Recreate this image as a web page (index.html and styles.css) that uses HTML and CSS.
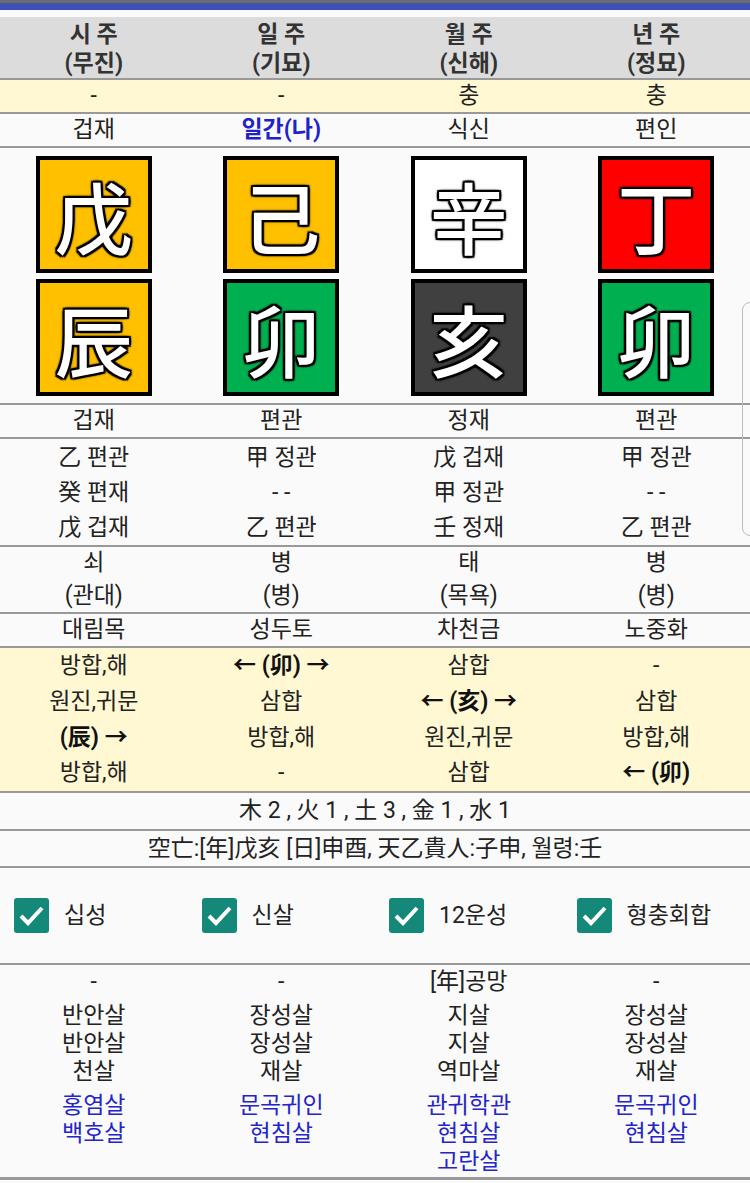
FILE: index.html
```html
<!DOCTYPE html>
<html lang="ko">
<head>
  <meta charset="UTF-8">
  <meta name="viewport" content="width=device-width, initial-scale=1.0">
  <title>사주 명식</title>
  <link rel="stylesheet" href="styles.css">
</head>
<body>
  <div class="topbar"></div>

  <div class="saju">
    <div class="row head">
      <div>시 주<br>(무진)</div>
      <div>일 주<br>(기묘)</div>
      <div>월 주<br>(신해)</div>
      <div>년 주<br>(정묘)</div>
    </div>

    <div class="row yellow">
      <div>-</div><div>-</div><div>충</div><div>충</div>
    </div>

    <div class="row">
      <div>겁재</div><div class="me">일간(나)</div><div>식신</div><div>편인</div>
    </div>

    <div class="row pillars">
      <div class="pillar">
        <span class="gan earth">戊</span>
        <span class="gan earth">辰</span>
      </div>
      <div class="pillar">
        <span class="gan earth">己</span>
        <span class="gan wood">卯</span>
      </div>
      <div class="pillar">
        <span class="gan metal">辛</span>
        <span class="gan water">亥</span>
      </div>
      <div class="pillar">
        <span class="gan fire">丁</span>
        <span class="gan wood">卯</span>
      </div>
    </div>

    <div class="row">
      <div>겁재</div><div>편관</div><div>정재</div><div>편관</div>
    </div>

    <div class="row lines jijang">
      <div>乙 편관<br>癸 편재<br>戊 겁재</div>
      <div>甲 정관<br>- -<br>乙 편관</div>
      <div>戊 겁재<br>甲 정관<br>壬 정재</div>
      <div>甲 정관<br>- -<br>乙 편관</div>
    </div>

    <div class="row lines unsung">
      <div>쇠<br>(관대)</div>
      <div>병<br>(병)</div>
      <div>태<br>(목욕)</div>
      <div>병<br>(병)</div>
    </div>

    <div class="row">
      <div>대림목</div><div>성두토</div><div>차천금</div><div>노중화</div>
    </div>

    <div class="row yellow lines hap">
      <div>방합,해<br>원진,귀문<br><b>(辰) →</b><br>방합,해</div>
      <div><b>← (卯) →</b><br>삼합<br>방합,해<br>-</div>
      <div>삼합<br><b>← (亥) →</b><br>원진,귀문<br>삼합</div>
      <div>-<br>삼합<br>방합,해<br><b>← (卯)</b></div>
    </div>

    <div class="wide">木 2 , 火 1 , 土 3 , 金 1 , 水 1</div>
    <div class="wide short">空亡:[年]戊亥 [日]申酉, 天乙貴人:子申, 월령:壬</div>

    <div class="row checks">
      <label class="check"><svg viewBox="0 0 35 35"><rect x="0" y="0" width="35" height="35" rx="3" fill="#14897a"/><path d="M7 18 L14 25 L28 10" fill="none" stroke="#fff" stroke-width="4"/></svg>십성</label>
      <label class="check"><svg viewBox="0 0 35 35"><rect x="0" y="0" width="35" height="35" rx="3" fill="#14897a"/><path d="M7 18 L14 25 L28 10" fill="none" stroke="#fff" stroke-width="4"/></svg>신살</label>
      <label class="check"><svg viewBox="0 0 35 35"><rect x="0" y="0" width="35" height="35" rx="3" fill="#14897a"/><path d="M7 18 L14 25 L28 10" fill="none" stroke="#fff" stroke-width="4"/></svg>12운성</label>
      <label class="check"><svg viewBox="0 0 35 35"><rect x="0" y="0" width="35" height="35" rx="3" fill="#14897a"/><path d="M7 18 L14 25 L28 10" fill="none" stroke="#fff" stroke-width="4"/></svg>형충회합</label>
    </div>

    <div class="row shinsal">
      <div>
        <p>-</p>
        <p>반안살<br>반안살<br>천살</p>
        <p class="blue">홍염살<br>백호살</p>
      </div>
      <div>
        <p>-</p>
        <p>장성살<br>장성살<br>재살</p>
        <p class="blue">문곡귀인<br>현침살</p>
      </div>
      <div>
        <p>[年]공망</p>
        <p>지살<br>지살<br>역마살</p>
        <p class="blue">관귀학관<br>현침살<br>고란살</p>
      </div>
      <div>
        <p>-</p>
        <p>장성살<br>장성살<br>재살</p>
        <p class="blue">문곡귀인<br>현침살</p>
      </div>
    </div>
  </div>

  <div class="side-tab"></div>
</body>
</html>
```

FILE: styles.css
```css
body {
  margin: 0;
  background: #fafafa;
  color: #222;
  font-family: Roboto, "Noto Sans CJK KR", sans-serif;
  font-size: 23px;
}
.topbar {
  height: 7px;
  border-top: 3px solid #6d6d6d;
  background: #3f51b5;
  margin-bottom: 7px;
}
.row {
  display: grid;
  grid-template-columns: repeat(4, 1fr);
  text-align: center;
  border-bottom: 2px solid #999;
  line-height: 32px;
}
.head {
  background: #dcdcdc;
  font-weight: bold;
  color: #333;
  line-height: 29px;
  padding-top: 3px;
}
.yellow {
  background: #fff8d2;
}
.me {
  color: #1e22c8;
  font-weight: bold;
}
.pillars {
  padding: 8px 0 7px;
}
.pillar {
  display: flex;
  flex-direction: column;
  align-items: center;
  gap: 6px;
}
.gan {
  box-sizing: border-box;
  width: 116px;
  height: 117px;
  border: 4px solid #000;
  display: flex;
  align-items: center;
  justify-content: center;
  font-family: "Noto Sans CJK KR", sans-serif;
  font-weight: 500;
  font-size: 78px;
  line-height: 1;
  color: #fff;
  text-shadow: 2px 0 1px #000, -2px 0 1px #000, 0 2px 1px #000, 0 -2px 1px #000,
    2px 2px 1px #000, -2px -2px 1px #000, 2px -2px 1px #000, -2px 2px 1px #000,
    0 0 4px #000;
}
.earth { background: #ffc000; }
.wood { background: #00b050; }
.metal { background: #fff; }
.water { background: #404040; }
.fire { background: #ff0000; }
.jijang {
  line-height: 35px;
  padding: 1px 0 0;
}
.unsung {
  line-height: 32.5px;
}
.hap {
  line-height: 35.75px;
}
.hap b {
  font-weight: bold;
  color: #111;
}
.wide {
  text-align: center;
  line-height: 36px;
  border-bottom: 2px solid #999;
}
.short {
  line-height: 35px;
}
.checks {
  height: 95px;
  align-items: center;
  text-align: left;
}
.check {
  display: flex;
  align-items: center;
  gap: 15px;
  padding-left: 14px;
  color: #222;
}
.check svg {
  width: 35px;
  height: 35px;
}
.shinsal {
  line-height: 28px;
  padding: 3px 0 1px;
  border-bottom: 3px solid #999;
}
.shinsal p {
  margin: 0 0 6px;
}
.shinsal p:last-child {
  margin-bottom: 0;
}
.blue {
  color: #2424c8;
}
.side-tab {
  position: absolute;
  left: 742px;
  top: 302px;
  width: 30px;
  height: 232px;
  border: 1px solid #bbb;
  border-radius: 8px;
}
```
